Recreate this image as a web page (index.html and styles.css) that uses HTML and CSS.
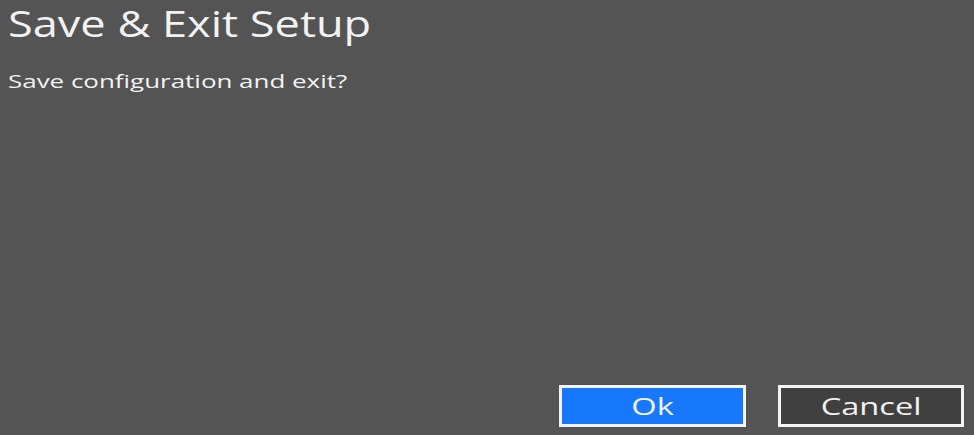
FILE: index.html
```html
<!DOCTYPE html>
<html>
<head>
<meta charset="utf-8">
<link rel="stylesheet" href="styles.css">
</head>
<body>
<div class="screen">
  <h1 class="title"><span class="wide">Save &amp; Exit Setup</span></h1>
  <p class="message"><span class="wide">Save configuration and exit?</span></p>
  <div class="spacer"></div>
  <div class="actions">
    <button class="btn btn-ok"><span class="wide">Ok</span></button>
    <button class="btn btn-cancel"><span class="wide">Cancel</span></button>
  </div>
</div>
</body>
</html>
```
FILE: styles.css
```css
html, body {
  margin: 0;
  padding: 0;
  width: 974px;
  height: 435px;
  background: #545454;
  overflow: hidden;
}
.screen {
  display: flex;
  flex-direction: column;
  height: 435px;
  box-sizing: border-box;
  padding: 1px 10px 8px 8px;
  font-family: "Open Sans", "Noto Sans", sans-serif;
  color: #f2f2f2;
}
.wide {
  display: inline-block;
  white-space: nowrap;
}
.title {
  margin: 0;
  font-size: 36px;
  font-weight: 400;
  line-height: 45px;
}
.title .wide {
  transform: scaleX(1.253);
  transform-origin: left center;
}
.message {
  margin: 23px 0 0 0;
  font-size: 19px;
  line-height: 24px;
}
.message .wide {
  transform: scaleX(1.365);
  transform-origin: left center;
}
.spacer { flex: 1; }
.actions {
  display: flex;
  justify-content: flex-end;
  gap: 32px;
}
.btn {
  height: 42px;
  box-sizing: border-box;
  border: 3px solid #f4f4f4;
  font-family: "Open Sans", "Noto Sans", sans-serif;
  font-size: 24px;
  color: #f2f2f2;
  padding: 0;
  line-height: 34px;
}
.btn .wide {
  transform: scaleX(1.36);
  transform-origin: center center;
}
.btn-ok { width: 187px; background: #1878fb; }
.btn-cancel { width: 186px; background: #404040; }
```
